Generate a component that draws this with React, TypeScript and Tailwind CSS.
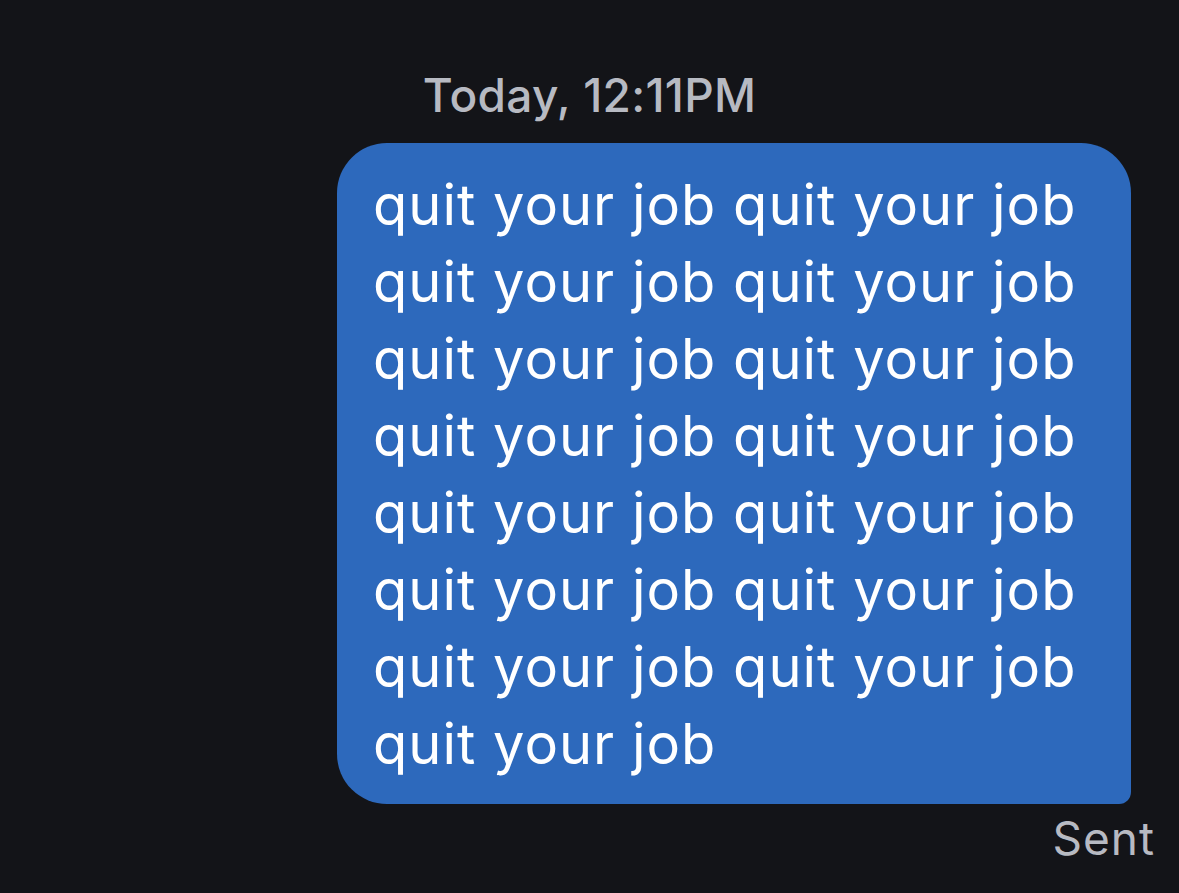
export default function App() {
  const msg = Array(15).fill('quit your job').join(' ');
  return (
    <div className="min-h-screen w-full bg-[#131418] flex flex-col" style={{ fontFamily: 'Inter, "Noto Sans", sans-serif' }}>
      {/* timestamp */}
      <div className="pt-[69px] text-center text-[46px] leading-[52px] font-medium tracking-[0.3px] text-[#b7bac2]">Today, 12:11PM</div>
      <div className="flex justify-end pr-[48px] mt-[22px]">
        <div className="w-[794px] bg-[#2d69bc] text-white text-[56px] leading-[77px] tracking-[1px] pl-[36px] pr-[30px] pt-[24px] pb-[21px] rounded-tl-[50px] rounded-tr-[50px] rounded-bl-[50px] rounded-br-[12px]">
          {msg}
        </div>
      </div>
      <div className="flex justify-end pr-[24px] mt-[8px] text-[46px] leading-[52px] tracking-[1px] text-[#b7bac2]">Sent</div>
    </div>
  );
}
